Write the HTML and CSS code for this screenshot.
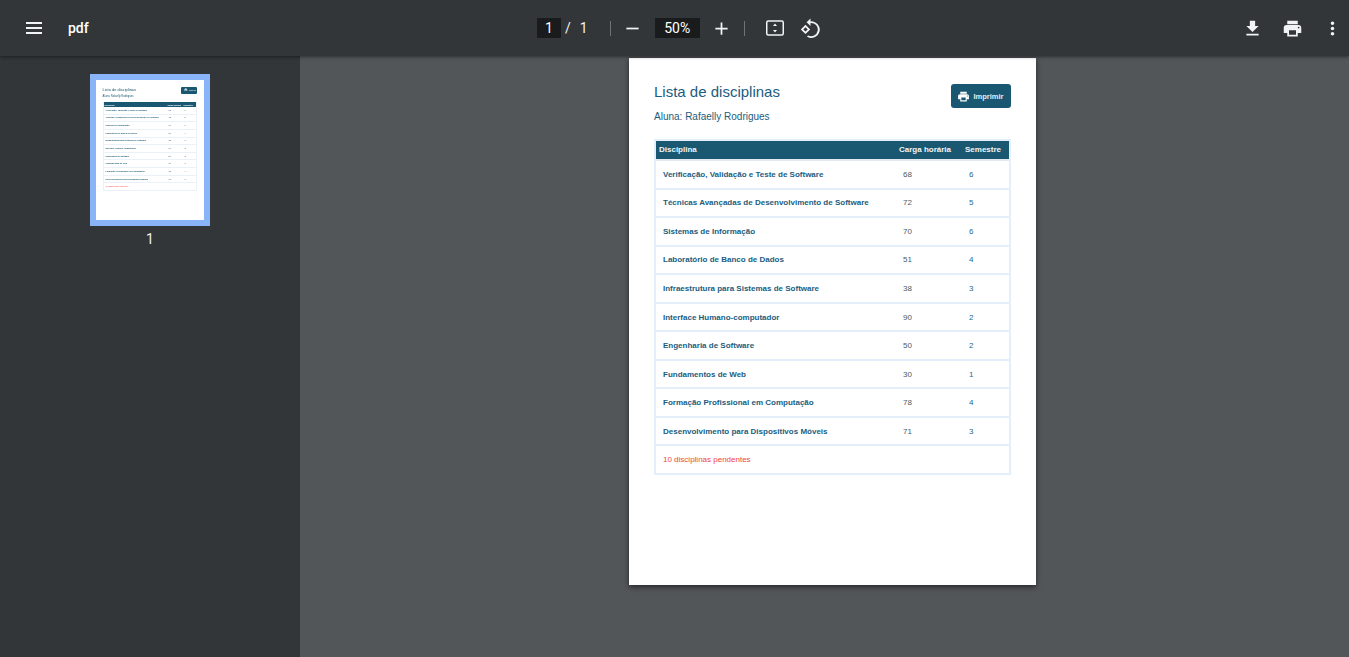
FILE: index.html
```html
<!DOCTYPE html>
<html lang="en">

<head>
  <meta charset="UTF-8" />
  <meta name="viewport" content="width=device-width, initial-scale=1.0" />
  <title>pdf</title>
  <link rel="stylesheet" href="styles.css">
</head>

<body>
  <header class="toolbar">
    <div class="toolbar-left">
      <svg class="icon icon-menu" viewBox="0 0 24 24"><path d="M4 18h16v-2H4v2zm0-5h16v-2H4v2zm0-7v2h16V6H4z" /></svg>
      <span class="doc-title">pdf</span>
    </div>
    <div class="toolbar-center">
      <span class="page-box">1</span>
      <span class="page-slash">/</span>
      <span class="page-total">1</span>
      <span class="separator sep-first"></span>
      <svg class="icon icon-minus" viewBox="0 0 24 24"><path d="M19 13H5v-2h14v2z" /></svg>
      <span class="zoom-box">50%</span>
      <svg class="icon icon-plus" viewBox="0 0 24 24"><path d="M19 13h-6v6h-2v-6H5v-2h6V5h2v6h6v2z" /></svg>
      <span class="separator sep-second"></span>
      <svg class="icon icon-fit" viewBox="0 0 24 24">
        <rect class="fit-frame" x="3.750" y="5" width="16.500" height="14" rx="1.500" />
        <path d="M12 7.500l2 2.500h-4zM12 16.500l-2-2.500h4z" />
      </svg>
      <svg class="icon icon-rotate" viewBox="0 0 24 24">
        <path d="M7.500 8.700L2.800 13.400l4.700 4.700 4.700-4.700-4.700-4.700zm0 2.500l2.200 2.200-2.200 2.200-2.200-2.200 2.200-2.200z" />
        <path d="M12.500 5.400V2.500L8.600 6.200l3.900 3.700V7a6.600 6.600 0 1 1-2.400 12.400l-1.200 1.200A8.300 8.300 0 1 0 12.500 5.400z" />
      </svg>
    </div>
    <div class="toolbar-right">
      <svg class="icon" viewBox="0 0 24 24"><path d="M19 9h-4V3H9v6H5l7 7 7-7zM5 18v2h14v-2H5z" /></svg>
      <svg class="icon" viewBox="0 0 24 24"><path d="M19 8H5c-1.660 0-3 1.340-3 3v6h4v4h12v-4h4v-6c0-1.660-1.340-3-3-3zm-3 11H8v-5h8v5zm3-7c-.55 0-1-.45-1-1s.45-1 1-1 1 .45 1 1-.45 1-1 1zm-1-9H6v4h12V3z" /></svg>
      <svg class="icon" viewBox="0 0 24 24"><path d="M12 8c1.100 0 2-.9 2-2s-.9-2-2-2-2 .9-2 2 .9 2 2 2zm0 2c-1.100 0-2 .9-2 2s.9 2 2 2 2-.9 2-2-.9-2-2-2zm0 6c-1.100 0-2 .9-2 2s.9 2 2 2 2-.9 2-2-.9-2-2-2z" /></svg>
    </div>
  </header>

  <div class="viewer">
    <aside class="sidebar">
      <div class="thumb">
        <div class="thumb-page">
          <div class="thumb-head">
            <div>
              <div class="thumb-title">Lista de disciplinas</div>
              <div class="thumb-student">Aluna: Rafaelly Rodrigues</div>
            </div>
            <span class="thumb-btn">
              <svg viewBox="0 0 24 24"><path d="M19 8H5c-1.660 0-3 1.340-3 3v6h4v4h12v-4h4v-6c0-1.660-1.340-3-3-3zm-3 11H8v-5h8v5zm3-7c-.55 0-1-.45-1-1s.45-1 1-1 1 .45 1 1-.45 1-1 1zm-1-9H6v4h12V3z" /></svg>
              Imprimir
            </span>
          </div>
          <table class="thumb-table">
            <tr><th>Disciplina</th><th>Carga horária</th><th>Semestre</th></tr>
            <tr><td>Verificação, Validação e Teste de Software</td><td>68</td><td>6</td></tr>
            <tr><td>Técnicas Avançadas de Desenvolvimento de Software</td><td>72</td><td>5</td></tr>
            <tr><td>Sistemas de Informação</td><td>70</td><td>6</td></tr>
            <tr><td>Laboratório de Banco de Dados</td><td>51</td><td>4</td></tr>
            <tr><td>Infraestrutura para Sistemas de Software</td><td>38</td><td>3</td></tr>
            <tr><td>Interface Humano-computador</td><td>90</td><td>2</td></tr>
            <tr><td>Engenharia de Software</td><td>50</td><td>2</td></tr>
            <tr><td>Fundamentos de Web</td><td>30</td><td>1</td></tr>
            <tr><td>Formação Profissional em Computação</td><td>78</td><td>4</td></tr>
            <tr><td>Desenvolvimento para Dispositivos Móveis</td><td>71</td><td>3</td></tr>
            <tr><td class="thumb-pending" colspan="3">10 disciplinas pendentes</td></tr>
          </table>
        </div>
      </div>
      <span class="thumb-number">1</span>
    </aside>

    <main class="main">
      <section class="page">
        <div class="page-head">
          <div>
            <h1>Lista de disciplinas</h1>
            <p class="student">Aluna: Rafaelly Rodrigues</p>
          </div>
          <button class="print-btn" type="button">
            <svg viewBox="0 0 24 24"><path d="M19 8H5c-1.660 0-3 1.340-3 3v6h4v4h12v-4h4v-6c0-1.660-1.340-3-3-3zm-3 11H8v-5h8v5zm3-7c-.55 0-1-.45-1-1s.45-1 1-1 1 .45 1 1-.45 1-1 1zm-1-9H6v4h12V3z" /></svg>
            Imprimir
          </button>
        </div>

        <table class="subjects">
          <thead>
            <tr><th class="col-name">Disciplina</th><th class="col-hours">Carga horária</th><th>Semestre</th></tr>
          </thead>
          <tbody>
            <tr><td class="name">Verificação, Validação e Teste de Software</td><td class="hours">68</td><td class="term">6</td></tr>
            <tr><td class="name">Técnicas Avançadas de Desenvolvimento de Software</td><td class="hours">72</td><td class="term">5</td></tr>
            <tr><td class="name">Sistemas de Informação</td><td class="hours">70</td><td class="term">6</td></tr>
            <tr><td class="name">Laboratório de Banco de Dados</td><td class="hours">51</td><td class="term">4</td></tr>
            <tr><td class="name">Infraestrutura para Sistemas de Software</td><td class="hours">38</td><td class="term">3</td></tr>
            <tr><td class="name">Interface Humano-computador</td><td class="hours">90</td><td class="term">2</td></tr>
            <tr><td class="name">Engenharia de Software</td><td class="hours">50</td><td class="term">2</td></tr>
            <tr><td class="name">Fundamentos de Web</td><td class="hours">30</td><td class="term">1</td></tr>
            <tr><td class="name">Formação Profissional em Computação</td><td class="hours">78</td><td class="term">4</td></tr>
            <tr><td class="name">Desenvolvimento para Dispositivos Móveis</td><td class="hours">71</td><td class="term">3</td></tr>
            <tr><td class="pending" colspan="3">10 disciplinas pendentes</td></tr>
          </tbody>
        </table>
      </section>
    </main>
  </div>
</body>

</html>
```

FILE: styles.css
```css
html,
body {
  height: 100%;
}

body {
  margin: 0;
  display: flex;
  flex-direction: column;
  overflow: hidden;
  background-color: #525659;
  font-family: "Liberation Sans", Arial, sans-serif;
}

/* Top bar */
.toolbar {
  position: relative;
  z-index: 2;
  flex: 0 0 56px;
  display: flex;
  align-items: center;
  background-color: #323639;
  color: #f1f3f4;
  font-family: Roboto, sans-serif;
  box-shadow: 0 1px 3px rgba(0, 0, 0, 0.45);
}

.icon {
  width: 24px;
  height: 24px;
  fill: #f1f3f4;
  flex: none;
}

.toolbar-left {
  flex: 0 0 537px;
  display: flex;
  align-items: center;
  padding-left: 22px;
  box-sizing: border-box;
}

.doc-title {
  margin-left: 22px;
  font-size: 14px;
  font-weight: 500;
  color: #fff;
}

.toolbar-center {
  display: flex;
  align-items: center;
  font-size: 14px;
}

.page-box,
.zoom-box {
  height: 20px;
  line-height: 20px;
  text-align: center;
  background-color: #191b1c;
  color: #fff;
}

.page-box {
  width: 24px;
}

.zoom-box {
  width: 45px;
}

.page-slash {
  margin-left: 4px;
}

.page-total {
  margin-left: 9px;
}

.separator {
  width: 1px;
  height: 15px;
  background-color: #6f7376;
}

.sep-first {
  margin-left: 22px;
}

.icon-minus,
.icon-plus {
  width: 21px;
  height: 21px;
}

.icon-minus {
  margin-left: 11.500px;
  margin-right: 11.500px;
}

.icon-plus {
  margin-left: 11.500px;
}

.sep-second {
  margin-left: 11.500px;
}

.icon-fit {
  margin-left: 18px;
}

.fit-frame {
  fill: none;
  stroke: #f1f3f4;
  stroke-width: 1.500;
}

.icon-rotate {
  margin-left: 11px;
}

.toolbar-right {
  margin-left: auto;
  padding-right: 6.500px;
  display: flex;
  gap: 19px;
}

.toolbar-right .icon {
  width: 21px;
  height: 21px;
}

/* Thumbnails and document area */
.viewer {
  flex: 1;
  display: flex;
  min-height: 0;
}

.sidebar {
  flex: 0 0 300px;
  display: flex;
  flex-direction: column;
  align-items: center;
  padding-top: 18px;
  box-sizing: border-box;
  background-color: #323639;
}

.thumb {
  width: 120px;
  height: 152px;
  padding: 6px;
  box-sizing: border-box;
  background-color: #8ab4f8;
}

.thumb-page {
  height: 140px;
  padding: 6.500px 7px 0 6.500px;
  box-sizing: border-box;
  background-color: #fff;
  color: #1a5872;
}

.thumb-head {
  display: flex;
  justify-content: space-between;
  height: 15.500px;
  filter: blur(0.3px);
}

.thumb-title {
  font-size: 4px;
  line-height: 5px;
}

.thumb-student {
  margin-top: 3px;
  font-size: 2.700px;
  line-height: 4px;
}

.thumb-btn {
  display: flex;
  align-items: center;
  justify-content: flex-end;
  gap: 1px;
  width: 16px;
  height: 7px;
  padding-right: 1px;
  box-sizing: border-box;
  border-radius: 1px;
  background-color: #1a5872;
  color: #fff;
  font-size: 2px;
}

.thumb-btn svg {
  width: 3.500px;
  height: 3.500px;
  fill: #fff;
}

.thumb-table {
  width: 94px;
  table-layout: fixed;
  border-spacing: 0;
  border-left: 1px solid #eaf1f8;
  border-right: 1px solid #eaf1f8;
  font-size: 2.100px;
  filter: blur(0.3px);
}

.thumb-table th {
  height: 5px;
  padding: 0 1px;
  background-color: #1a5872;
  color: #fff;
  text-align: left;
}

.thumb-table th:first-child {
  width: 61px;
}

.thumb-table th:nth-child(2) {
  width: 14px;
}

.thumb-table td {
  height: 6.650px;
  padding: 0 2px;
  border-bottom: 1px solid #eaf1f8;
  font-weight: bold;
  line-height: 3px;
  white-space: nowrap;
}

.thumb-table td + td {
  font-weight: normal;
}

.thumb-table .thumb-pending {
  color: #ef4444;
  font-weight: normal;
}

.thumb-number {
  margin-top: 6px;
  font-family: Roboto, sans-serif;
  font-size: 14px;
  line-height: 14px;
  color: #f1f3f4;
}

.main {
  flex: 1;
  display: flex;
  justify-content: center;
  align-items: flex-start;
  padding: 2px 0 0 16px;
  min-width: 0;
}

/* The document page */
.page {
  width: 407px;
  height: 527px;
  padding: 26px 25px 0;
  box-sizing: border-box;
  background-color: #fff;
  color: #1b5d80;
  box-shadow: 0 2px 5px rgba(0, 0, 0, 0.55);
}

.page-head {
  display: flex;
  justify-content: space-between;
  align-items: flex-start;
  height: 55px;
}

h1 {
  margin: 0;
  font-size: 15px;
  line-height: 16px;
  font-weight: normal;
}

.student {
  margin: 11px 0 0;
  font-size: 10px;
  line-height: 12px;
}

.print-btn {
  display: flex;
  align-items: center;
  gap: 3.500px;
  width: 60px;
  height: 24px;
  padding: 0 0 0 6px;
  border: none;
  border-radius: 3px;
  background-color: #1a5872;
  color: #e6eef2;
  font-family: "Liberation Sans", Arial, sans-serif;
  font-size: 7.500px;
  font-weight: bold;
}

.print-btn svg {
  width: 13px;
  height: 13px;
  fill: #fff;
}

.subjects {
  width: 357px;
  table-layout: fixed;
  border-spacing: 0;
  border: 2px solid #e3effb;
  border-bottom: none;
  font-size: 8px;
}

.subjects th {
  height: 16px;
  padding: 0 0 2px 3px;
  background-color: #1a5872;
  background-clip: padding-box;
  color: #f1f5f8;
  text-align: left;
  font-weight: bold;
  border-bottom: 2px solid #e3e9ef;
}

.col-name {
  width: 237px;
}

.col-hours {
  width: 63px;
}

.subjects td {
  height: 26.550px;
  padding: 0 0 0 7px;
  border-bottom: 2px solid #e3effb;
}

.subjects .name {
  font-weight: bold;
}

.subjects .hours {
  color: #4a5a66;
}

.subjects .term {
  color: #1a6a90;
}

.subjects .pending {
  color: #ef4444;
}
```
